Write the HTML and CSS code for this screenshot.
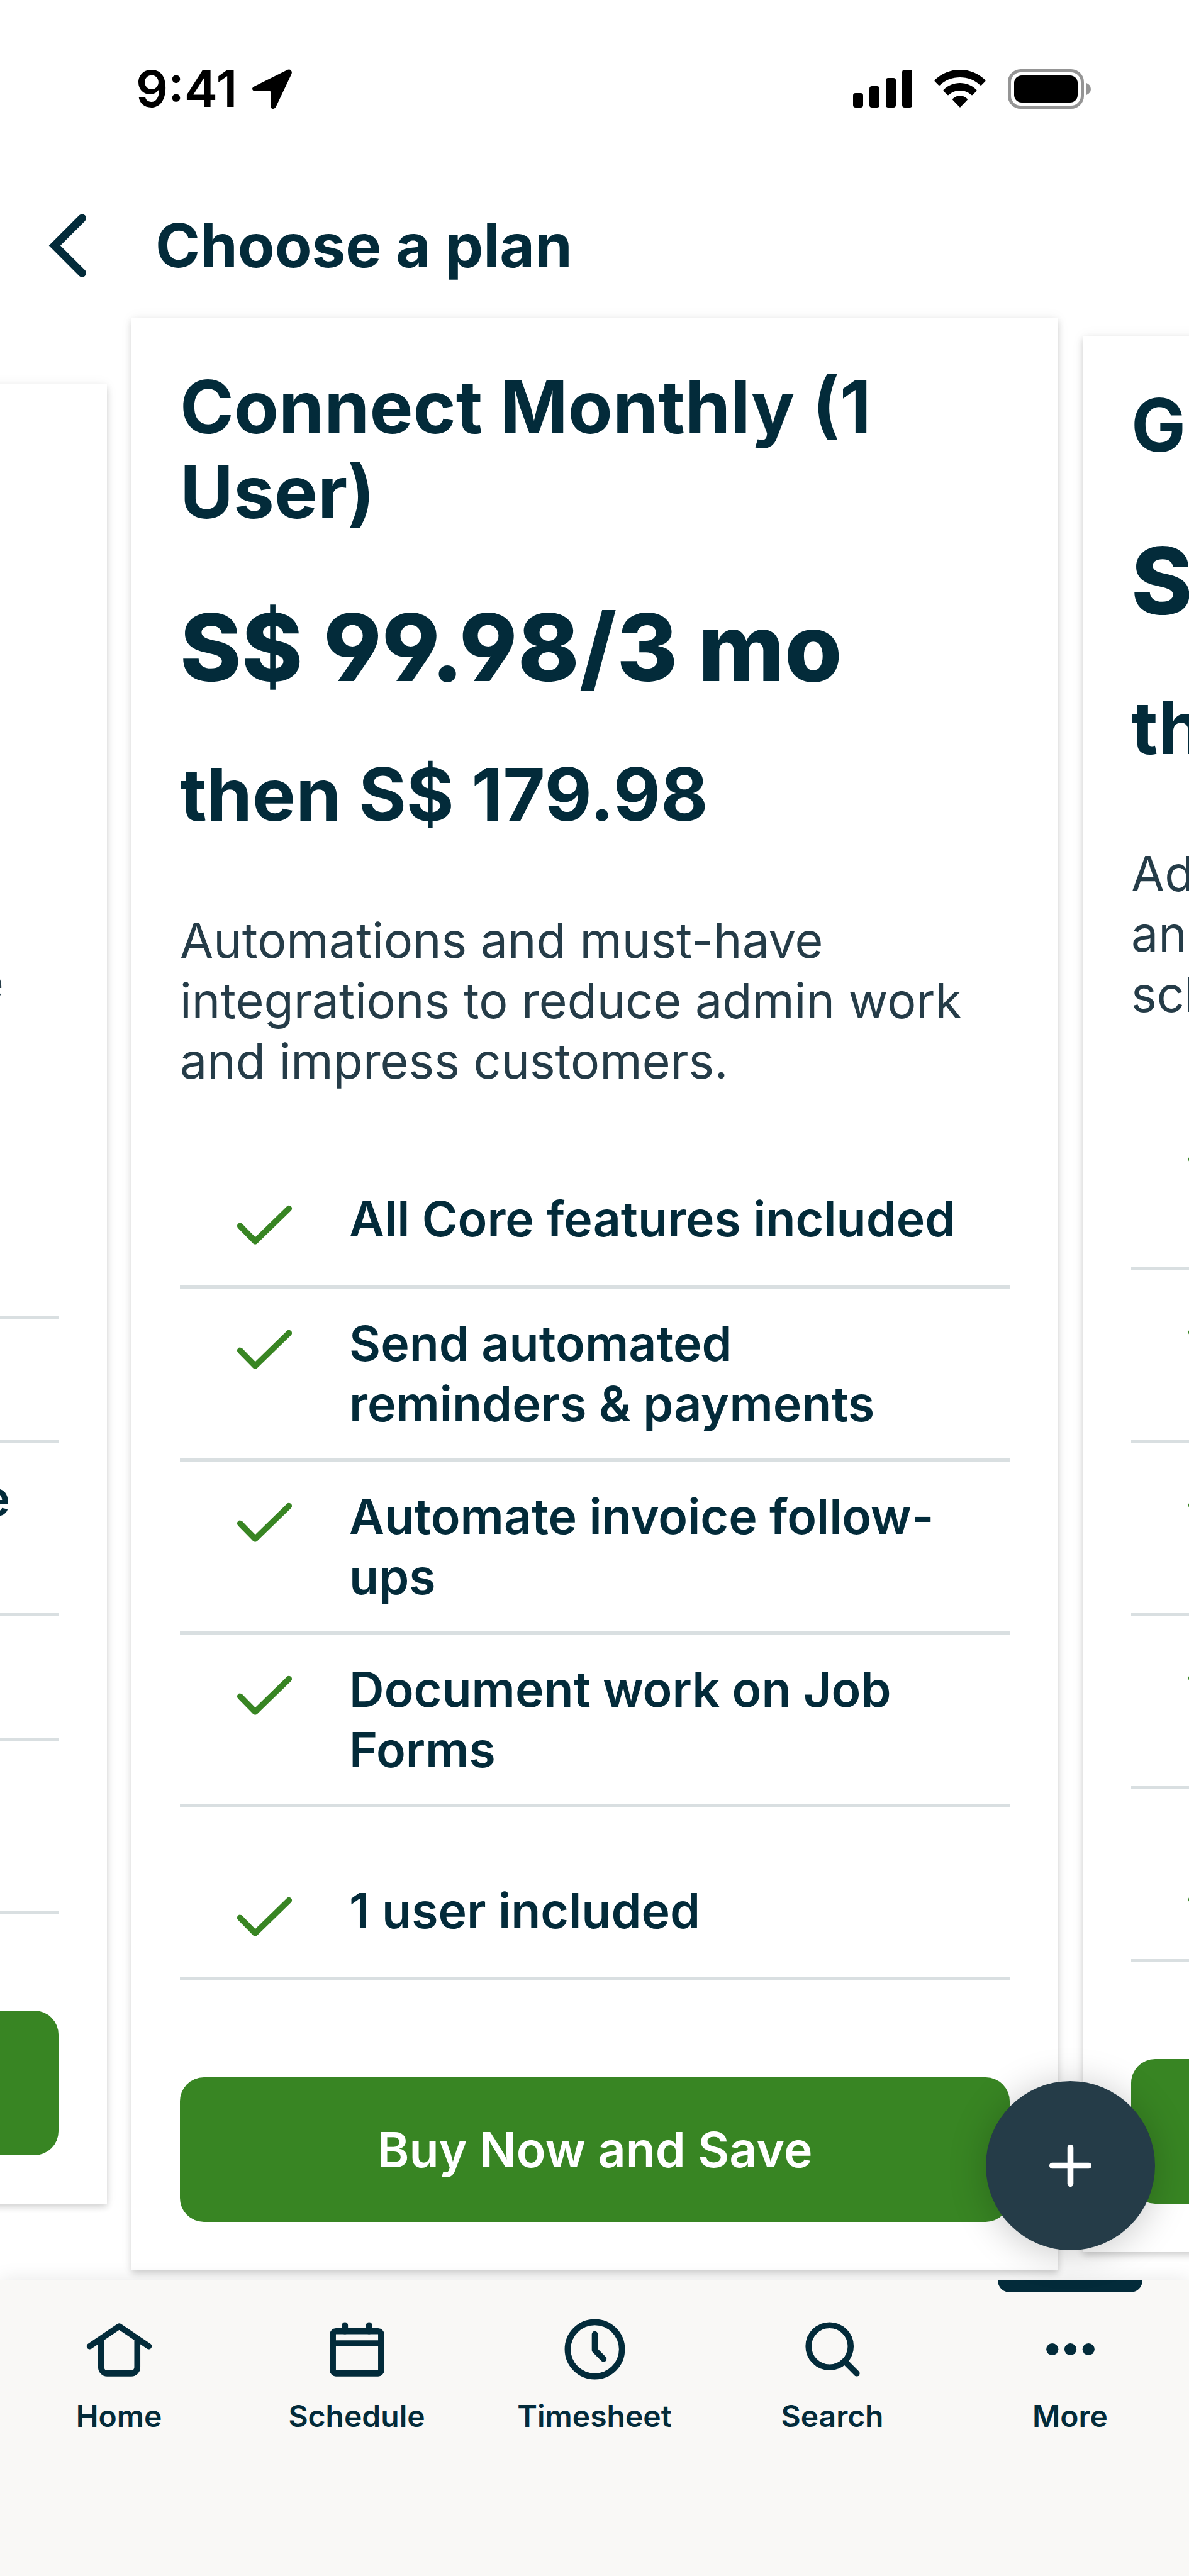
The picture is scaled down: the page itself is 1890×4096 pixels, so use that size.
FILE: index.html
```html
<!DOCTYPE html>
<html lang="en">
<head>
  <meta charset="UTF-8" />
  <meta name="viewport" content="width=device-width, initial-scale=1.0" />
  <title>Choose a plan</title>
  <link rel="stylesheet" href="styles.css">
</head>
<body>
  <!-- shared check icon -->
  <svg class="sprite" aria-hidden="true">
    <symbol id="check" viewBox="0 0 24 24">
      <path d="M3.9 12.4l5 5.1L20.1 6.6" fill="none" stroke="currentColor" stroke-width="2" stroke-linecap="round" stroke-linejoin="round" />
    </symbol>
  </svg>

  <div class="app">
    <div class="status-bar">
      <div class="status-left">
        <span class="time">9:41</span>
        <svg class="location" viewBox="0 0 63 63"><path d="M4 27L55 1.500Q59-.5 61.500 2Q64 4.500 62 8.500L38 59Q36 63 33 63Q29 63 29 58V36Q29 34.500 27.500 34.500H5Q0 34.500 0 31Q0 29 4 27Z" /></svg>
      </div>
      <div class="status-right">
        <svg class="signal" viewBox="0 0 94 60">
          <rect x="0" y="37" width="16" height="23" rx="4" />
          <rect x="26" y="26" width="16" height="34" rx="4" />
          <rect x="52" y="13" width="16" height="47" rx="4" />
          <rect x="78" y="0" width="16" height="60" rx="4" />
        </svg>
        <svg class="wifi" viewBox="0 0 82 60">
          <path d="M41 0C57 0 70 6 81 16Q82 17.500 81 18.500L75 24.500Q74 25 73 24.500C64 16 53 12 41 12S18 16 9 24.500Q8 25 7 24.500L1 18.500Q0 17.500 1 16C12 6 25 0 41 0Z" />
          <path d="M41 21C51 21 60 25 67 31.500Q68 33 67 34L61 40Q60 40.500 59 40C54 35.500 48 33 41 33S28 35.500 23 40Q22 40.500 21 40L15 34Q14 33 15 31.500C22 25 31 21 41 21Z" />
          <path d="M41 41C45.500 41 49 43 52.500 46Q53.500 47 52.500 48L42 59Q41 60 40 59L29.500 48Q28.500 47 29.500 46C33 43 36.500 41 41 41Z" />
        </svg>
        <svg class="battery" viewBox="0 0 132 63">
          <rect x="2.500" y="2.500" width="116" height="58" rx="18" fill="none" stroke="#959595" stroke-width="5" />
          <rect x="10" y="10" width="101" height="43" rx="12" />
          <path d="M125 22Q132 25 132 31.500T125 41Z" fill="#959595" />
        </svg>
      </div>
    </div>

    <header class="header">
      <button class="back" aria-label="Back">
        <svg viewBox="0 0 24 24"><path d="M16.800 2.900L7.700 12l9.100 9.100" stroke-width="2.700" /></svg>
      </button>
      <h1>Choose a plan</h1>
    </header>

    <main class="main">
      <div class="slider">
        <section class="card">
          <h2>Core Monthly (1 User)</h2>
          <p class="price">S$ 49.98/3 mo</p>
          <p class="then">then S$ 79.98</p>
          <p class="desc">Get organized with all the<br>basics to win your jobs at one site<br>and get paid faster.</p>
          <ul class="features">
            <li><svg><use href="#check" /></svg><span>Quotes, jobs, invoices<br>and payments</span></li>
            <li><svg><use href="#check" /></svg><span>Client management</span></li>
            <li><svg><use href="#check" /></svg><span class="nowrap">Client reports in one place<br>on the app</span></li>
            <li><svg><use href="#check" /></svg><span>Online booking</span></li>
            <li><svg><use href="#check" /></svg><span>1 user included</span></li>
          </ul>
          <button class="buy">Buy Now and Save</button>
        </section>

        <section class="card">
          <h2>Connect Monthly (1 User)</h2>
          <p class="price">S$ 99.98/3 mo</p>
          <p class="then">then S$ 179.98</p>
          <p class="desc">Automations and must-have integrations to reduce admin work and impress customers.</p>
          <ul class="features">
            <li><svg><use href="#check" /></svg><span>All Core features included</span></li>
            <li><svg><use href="#check" /></svg><span>Send automated reminders &amp; payments</span></li>
            <li><svg><use href="#check" /></svg><span>Automate invoice follow-ups</span></li>
            <li><svg><use href="#check" /></svg><span>Document work on Job Forms</span></li>
            <li><svg><use href="#check" /></svg><span>1 user included</span></li>
          </ul>
          <button class="buy">Buy Now and Save</button>
        </section>

        <section class="card">
          <h2>Grow Monthly</h2>
          <p class="price">S$ 199.98/3 mo</p>
          <p class="then">then S$ 359.98</p>
          <p class="desc">Advanced quoting, job costing<br>and automations to save time<br>scheduling and selling.</p>
          <ul class="features">
            <li><svg><use href="#check" /></svg><span>All Connect features<br>included</span></li>
            <li><svg><use href="#check" /></svg><span>Add images to your<br>quotes</span></li>
            <li><svg><use href="#check" /></svg><span>Track the profit<br>on each job</span></li>
            <li><svg><use href="#check" /></svg><span>Two-way text<br>messaging</span></li>
            <li><svg><use href="#check" /></svg><span>1 user included</span></li>
          </ul>
          <button class="buy">Buy Now and Save</button>
        </section>
      </div>

      <button class="fab" aria-label="Create new">
        <svg viewBox="0 0 24 24"><path d="M12 6v12M6 12h12" stroke-width="2" /></svg>
      </button>
    </main>

    <nav class="tabs">
      <a href="#" class="tab">
        <svg viewBox="0 0 24 24"><path d="M2.200 11L12 4.400l9.800 6.600M6 9v9a2 2 0 0 0 2 2h8a2 2 0 0 0 2-2V9" /></svg>
        Home
      </a>
      <a href="#" class="tab">
        <svg viewBox="0 0 24 24"><rect x="4" y="6" width="16" height="14" rx="1" /><path d="M4 10h16M8 4v2M16 4v2" /></svg>
        Schedule
      </a>
      <a href="#" class="tab">
        <svg viewBox="0 0 24 24"><circle cx="12" cy="12" r="9" /><path d="M12 7v5.300l2.900 2.900" /></svg>
        Timesheet
      </a>
      <a href="#" class="tab">
        <svg viewBox="0 0 24 24"><circle cx="11" cy="11" r="7" /><path d="M16 16l4 4" /></svg>
        Search
      </a>
      <a href="#" class="tab active">
        <svg viewBox="0 0 24 24"><g fill="currentColor" stroke="none"><circle cx="6" cy="12" r="2" /><circle cx="12" cy="12" r="2" /><circle cx="18" cy="12" r="2" /></g></svg>
        More
      </a>
    </nav>
  </div>
</body>
</html>
```
FILE: styles.css
```css
* {
  box-sizing: border-box;
}
body {
  margin: 0;
  background: #fff;
  color: #032b3a;
  font-family: Inter, "Liberation Sans", sans-serif;
}
h1, h2, p, ul {
  margin: 0;
  padding: 0;
}
button {
  border: none;
  padding: 0;
  font-family: inherit;
  cursor: pointer;
}
svg {
  display: block;
  flex: none;
}
.sprite {
  position: absolute;
  width: 0;
  height: 0;
}
.app {
  display: flex;
  flex-direction: column;
  min-height: 100vh;
  overflow: hidden;
}

/* status bar */
.status-bar {
  display: flex;
  justify-content: space-between;
  align-items: center;
  height: 292px;
  padding: 0 156px 10px 216px;
  color: #000;
}
.status-left {
  display: flex;
  align-items: center;
  gap: 24px;
}
.time {
  font-size: 80px;
  line-height: 96px;
  font-weight: 600;
}
.location {
  width: 63px;
  height: 63px;
}
.status-right {
  display: flex;
  align-items: center;
  gap: 35px;
}
.signal {
  width: 94px;
  height: 60px;
}
.wifi {
  width: 82px;
  height: 60px;
}
.battery {
  width: 132px;
  height: 63px;
}

/* header */
.header {
  display: flex;
  align-items: center;
  gap: 82px;
  height: 196px;
  padding: 0 50px;
}
.back {
  background: none;
  color: inherit;
}
.back svg {
  width: 115px;
  height: 115px;
  fill: none;
  stroke: currentColor;
  stroke-linecap: round;
}
h1 {
  font-size: 96px;
  line-height: 120px;
  font-weight: 700;
}

/* plans */
.main {
  position: relative;
  flex: 1;
  display: flex;
}
.slider {
  flex: 1;
  min-width: 0;
  display: flex;
  justify-content: center;
  align-items: center;
  gap: 39px;
}
.card {
  flex: 0 0 calc(100% - 417px);
  padding: 75px 77px 77px;
  background: #fff;
  box-shadow: 0 5px 10px rgba(0, 0, 0, 0.16), 0 0 20px rgba(0, 0, 0, 0.05);
}
h2,
.then {
  font-size: 116px;
  line-height: 135px;
  font-weight: 700;
}
.price {
  margin: 84px 0 70px;
  font-size: 148px;
  line-height: 192px;
  font-weight: 800;
  font-feature-settings: "cv04";
}
.desc {
  margin: 116px 0;
  color: #253c48;
  font-size: 77px;
  line-height: 96px;
}
.features {
  list-style: none;
  font-size: 77px;
  line-height: 96px;
  font-weight: 600;
}
.features li {
  display: flex;
  align-items: flex-start;
  gap: 77px;
  padding: 39px 77px;
  border-bottom: 5px solid #d9dfe1;
}
.features li:last-child {
  padding-top: 116px;
}
.features svg {
  width: 115px;
  height: 115px;
  color: #388523;
}
.nowrap {
  white-space: nowrap;
}
.buy {
  display: block;
  width: 100%;
  height: 230px;
  margin-top: 154px;
  border-radius: 38px;
  background: #388523;
  color: #fff;
  font-size: 77px;
  font-weight: 600;
}
.fab {
  position: absolute;
  right: 54px;
  bottom: 48px;
  z-index: 2;
  display: flex;
  justify-content: center;
  align-items: center;
  width: 269px;
  height: 269px;
  border-radius: 50%;
  background: #253c48;
  color: #fff;
  box-shadow: 0 5px 60px rgba(0, 0, 0, 0.22);
}
.fab svg {
  width: 115px;
  height: 115px;
  stroke: currentColor;
  stroke-linecap: round;
}

/* bottom tabs */
.tabs {
  position: relative;
  display: flex;
  padding-bottom: 225px;
  background: #f9f8f6;
  box-shadow: 0 0 30px rgba(0, 0, 0, 0.1);
}
.tab {
  position: relative;
  flex: 1;
  display: flex;
  flex-direction: column;
  align-items: center;
  gap: 20px;
  padding-top: 52px;
  color: inherit;
  font-size: 48px;
  line-height: 58px;
  font-weight: 600;
  text-decoration: none;
}
.tab svg {
  width: 115px;
  height: 115px;
  fill: none;
  stroke: currentColor;
  stroke-width: 2;
  stroke-linecap: round;
  stroke-linejoin: round;
}
.active::before {
  content: "";
  position: absolute;
  top: 0;
  width: 230px;
  height: 19px;
  border-radius: 0 0 19px 19px;
  background: #032b3a;
}
```
